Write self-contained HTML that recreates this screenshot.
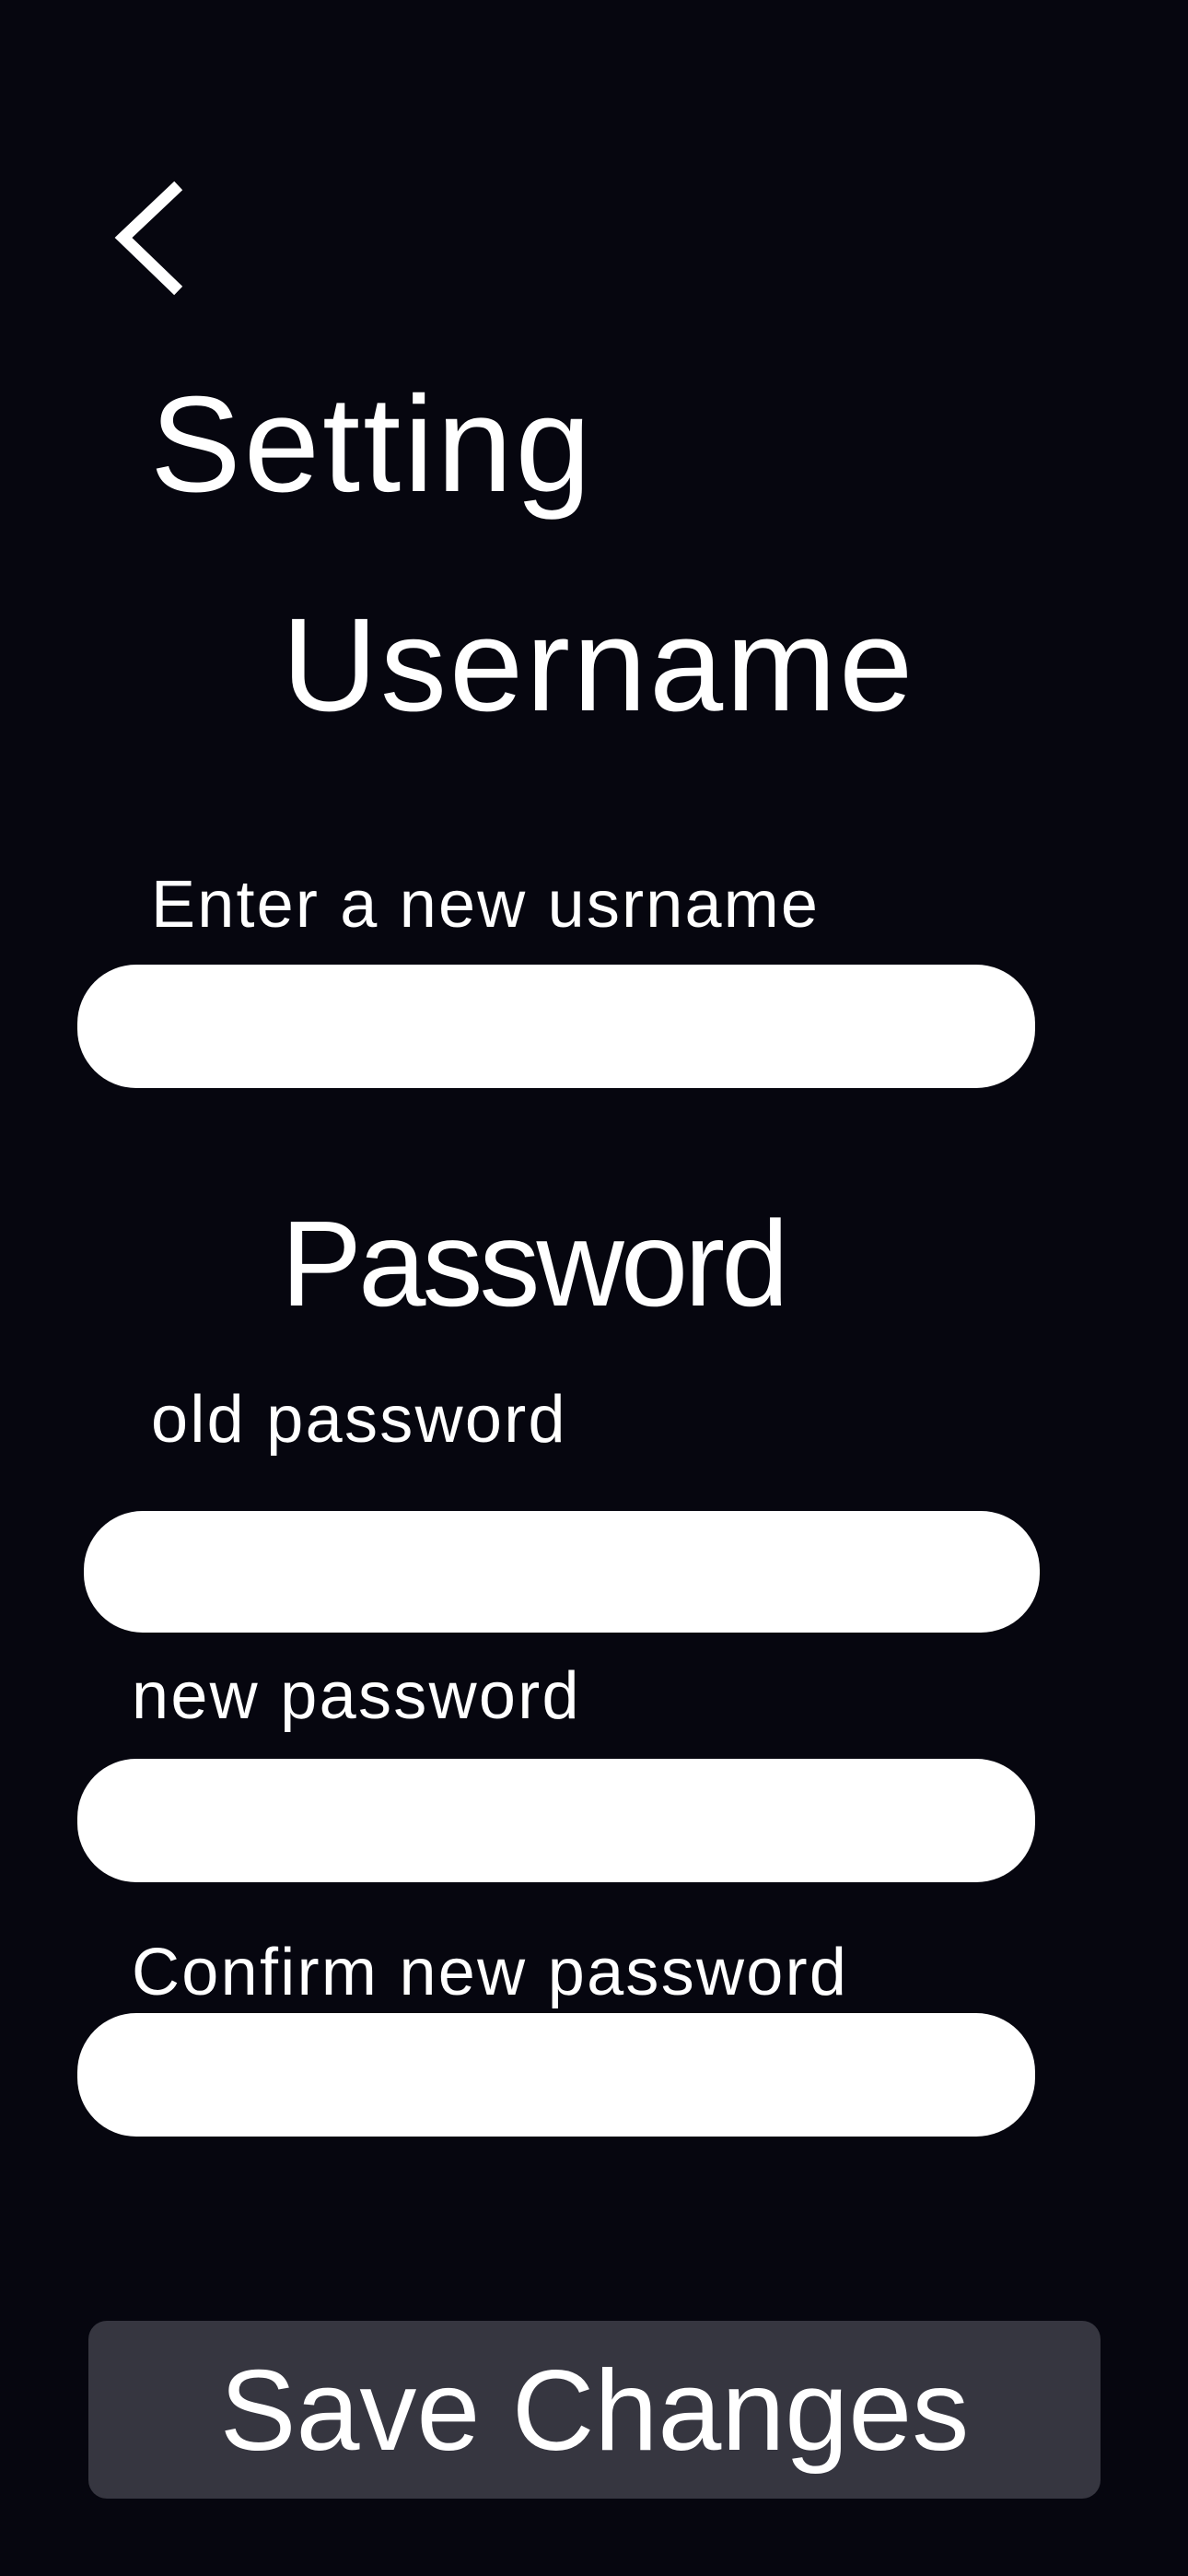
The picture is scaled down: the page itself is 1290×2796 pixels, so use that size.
<!DOCTYPE html>
<html><head><meta charset="utf-8"><style>
html,body{margin:0;padding:0;}
body{width:1290px;height:2796px;background:#06060f;position:relative;overflow:hidden;font-family:"Liberation Sans",sans-serif;color:#fff;}
.t{position:absolute;line-height:1;white-space:nowrap;}
.in{position:absolute;background:#fff;border-radius:64px;}
</style></head><body>
<svg style="position:absolute;left:0;top:0" width="300" height="400">
<polyline points="189,206 134,258 189,311" fill="none" stroke="#fff" stroke-width="13" stroke-linecap="square"/>
</svg>
<div class="t" style="left:163px;top:409px;font-size:148px;letter-spacing:3px;">Setting</div>
<div class="t" style="left:306px;top:650px;font-size:144px;letter-spacing:3px;">Username</div>
<div class="t" style="left:164px;top:946px;font-size:72px;letter-spacing:2.2px;">Enter a new usrname</div>
<div class="in" style="left:84px;top:1047px;width:1040px;height:134px;"></div>
<div class="t" style="left:305px;top:1306px;font-size:132px;letter-spacing:-4px;">Password</div>
<div class="t" style="left:164px;top:1505px;font-size:72px;letter-spacing:2.3px;">old password</div>
<div class="in" style="left:91px;top:1640px;width:1038px;height:132px;"></div>
<div class="t" style="left:143px;top:1805px;font-size:72px;letter-spacing:2.3px;">new password</div>
<div class="in" style="left:84px;top:1909px;width:1040px;height:134px;"></div>
<div class="t" style="left:143px;top:2105px;font-size:72px;letter-spacing:2.3px;">Confirm new password</div>
<div class="in" style="left:84px;top:2185px;width:1040px;height:134px;"></div>
<div style="position:absolute;left:96px;top:2519px;width:1099px;height:193px;background:#363640;border-radius:20px;"></div>
<div class="t" style="left:96px;width:1099px;text-align:center;top:2555px;font-size:124px;letter-spacing:0px;">Save Changes</div>
</body></html>
